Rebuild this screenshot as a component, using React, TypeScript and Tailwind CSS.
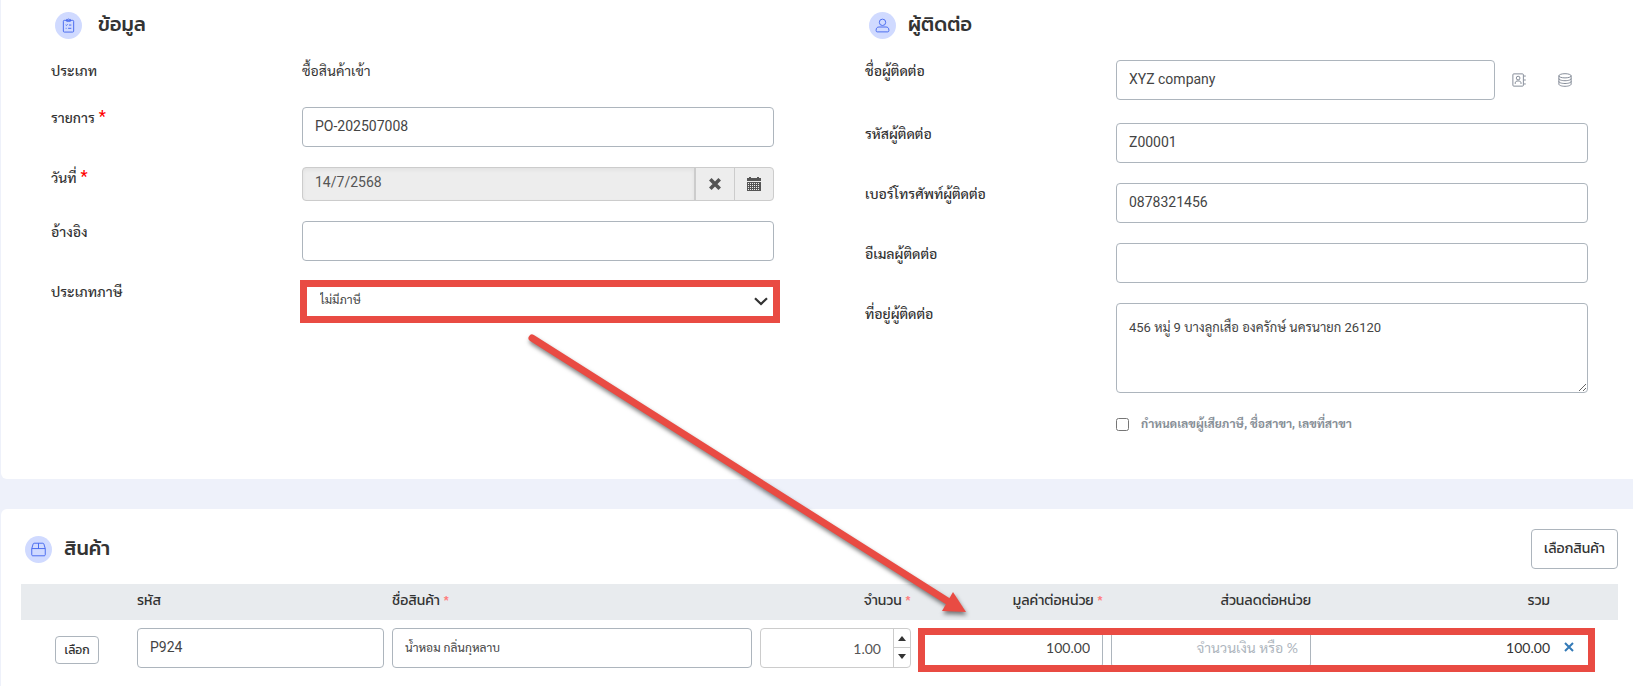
import type { ReactNode } from "react";

const icons = {
  clipboard: (
    <>
      <rect x="2.500" y="2.500" width="11" height="12.500" rx="1" />
      <path d="M6 2.500V1.500h1.200a.9.9 0 0 1 1.600 0H10v2H6zM5 7.300l.8.700 1.200-1.400M8.500 7.500h2.500M5 11h.9M7.600 11H11" />
    </>
  ),
  person: (
    <>
      <circle cx="8" cy="4.600" r="3.400" />
      <path d="M1.200 13c0-2.300 1.200-3.400 3-3.400h7.600c1.800 0 3 1.100 3 3.400v.7c0 .7-.5 1.100-1.100 1.100H2.300c-.6 0-1.100-.4-1.100-1.100z" />
    </>
  ),
  box: (
    <>
      <path d="M.8 7 2.300 2c.2-.4.500-.7 1-.7h9.400c.5 0 .8.300 1 .7L15.200 7v6.700c0 .6-.4 1-1 1H1.800c-.6 0-1-.4-1-1z" />
      <path d="M.8 7h14.400M8 1.300V7" />
    </>
  ),
  contacts: (
    <>
      <rect x="1" y="1" width="12" height="14" rx="1" />
      <circle cx="7" cy="5.800" r="2.100" />
      <path d="M3.700 12.500v-1c0-1.600 1-2.400 3.300-2.400s3.300.8 3.300 2.400v1M14.800 2.500v2M14.800 7v2M14.800 11.500v2" />
    </>
  ),
  database: (
    <>
      <ellipse cx="8" cy="3.200" rx="7" ry="2.400" />
      <path d="M1 3.200v9.500C1 14.100 4.100 15.200 8 15.200s7-1.100 7-2.500V3.200M1 6.400c0 1.400 3.100 2.400 7 2.400s7-1 7-2.400M1 9.600C1 11 4.100 12 8 12s7-1 7-2.400" />
    </>
  ),
};

function Icon({ name, className = "size-4" }: { name: keyof typeof icons; className?: string }) {
  return (
    <svg viewBox="0 0 16 16" fill="none" stroke="currentColor" className={className} aria-hidden="true">
      {icons[name]}
    </svg>
  );
}

const field = "block h-10 w-full rounded border border-[#adb5bd] bg-white px-3 pb-0.5 text-[#444] outline-none";
const kanit = "font-[Kanit,Prompt,'Noto_Sans_Thai','Noto_Sans',sans-serif]";
const number = "font-[Lato,Sarabun,'Noto_Sans_Thai',sans-serif]";

function Heading({ icon, gap, children }: { icon: keyof typeof icons; gap: string; children: ReactNode }) {
  return (
    <div className={`flex items-center ${gap}`}>
      <span className="flex size-[27px] items-center justify-center rounded-full bg-[#d0daff] text-[#4468ee]">
        <Icon name={icon} className="size-[15px]" />
      </span>
      <h2 className={`${kanit} pb-0.5 text-xl leading-[26px] font-medium text-[#333]`}>{children}</h2>
    </div>
  );
}

function Row({ label, id, required, children }: { label: string; id?: string; required?: boolean; children: ReactNode }) {
  return (
    <div className="grid grid-cols-[251px_1fr] items-start">
      <label htmlFor={id} className="text-sm leading-[22px] font-medium text-[#333]">
        {label}
        {required && <span className="ml-1 align-top text-base leading-5 text-[#f00]">*</span>}
      </label>
      {children}
    </div>
  );
}

function Star() {
  return <span className="text-[#ff7b7b]">*</span>;
}

export default function App() {
  return (
    <div className="relative min-h-screen overflow-hidden bg-[#eef1fa] pl-px font-[Roboto,Sarabun,'Noto_Sans_Thai_Looped','Noto_Sans',sans-serif] text-sm text-[#333]">
      <section className="mb-[30px] grid grid-cols-2 gap-x-[91px] rounded-bl-md bg-white pt-[11px] pr-[45px] pb-11 pl-[50px]">
        <div>
          <div className="pl-1">
            <Heading icon="clipboard" gap="gap-4">ข้อมูล</Heading>
          </div>
          <div className="mt-[21px] flex flex-col gap-5">
            <Row label="ประเภท">
              <span className="h-[27px] leading-[22px]">ซื้อสินค้าเข้า</span>
            </Row>
            <Row label="รายการ" id="doc-no" required>
              <input id="doc-no" className={`${field} text-sm`} defaultValue="PO-202507008" />
            </Row>
            <Row label="วันที่" id="doc-date" required>
              <div className="flex h-[34px] overflow-hidden rounded border border-[#ccc] bg-[#ededed] text-[#555]">
                <input
                  id="doc-date"
                  readOnly
                  className="min-w-0 flex-1 bg-transparent px-3 pb-1 text-sm shadow-inner outline-none"
                  defaultValue="14/7/2568"
                />
                <button type="button" aria-label="ล้างวันที่" className="flex w-10 items-center justify-center border-l-2 border-[#ccc]">
                  <svg viewBox="0 0 12 12" className="size-3" stroke="currentColor" strokeWidth="3.600">
                    <path d="M1.300 1.300l9.400 9.400M10.700 1.300l-9.400 9.400" />
                  </svg>
                </button>
                <button type="button" aria-label="เลือกวันที่" className="flex w-[39px] items-center justify-center border-l border-[#ccc]">
                  <svg viewBox="0 0 14 14" className="size-3.5" shapeRendering="crispEdges">
                    <path fill="currentColor" d="M0 1h2V0h2v1h6V0h2v1h2v3H0zM0 5h14v9H0z" />
                    <path stroke="#ededed" d="M1 6.500h12M1 8.500h12M1 10.500h12M1 12.500h12" strokeDasharray="1 1" />
                  </svg>
                </button>
              </div>
            </Row>
            <Row label="อ้างอิง" id="reference">
              <input id="reference" className={`${field} text-sm`} />
            </Row>
            <Row label="ประเภทภาษี" id="tax-type">
              <div className="relative">
                <select id="tax-type" className={`${field} appearance-none pr-8 pl-[17px] text-xs`} defaultValue="none">
                  <option value="none">ไม่มีภาษี</option>
                </select>
                <svg
                  viewBox="0 0 14 9"
                  className="pointer-events-none absolute top-4 right-1.5 h-[9px] w-3.5"
                  fill="none"
                  stroke="#333"
                  strokeWidth="2.200"
                >
                  <path d="M1 1.200 7 7l6-5.800" />
                </svg>
                <div className="pointer-events-none absolute -inset-x-0.5 -top-px -right-1.5 h-[43px] border-7 border-[#e94b43]" />
              </div>
            </Row>
          </div>
        </div>

        <div>
          <div className="pl-1">
            <Heading icon="person" gap="gap-3">ผู้ติดต่อ</Heading>
          </div>
          <div className="mt-[21px] flex flex-col gap-5">
            <Row label="ชื่อผู้ติดต่อ" id="contact-name">
              <div className="mb-[3px] flex items-center text-[#767e8c]">
                <input id="contact-name" className={`${field} min-w-0 flex-1 text-sm`} defaultValue="XYZ company" />
                <button type="button" aria-label="สมุดรายชื่อ" className="flex w-[47px] justify-center">
                  <Icon name="contacts" className="size-3.5" />
                </button>
                <button type="button" aria-label="ฐานข้อมูล" className="flex w-[46px] justify-center">
                  <Icon name="database" className="size-3.5" />
                </button>
              </div>
            </Row>
            <Row label="รหัสผู้ติดต่อ" id="contact-code">
              <input id="contact-code" className={`${field} text-sm`} defaultValue="Z00001" />
            </Row>
            <Row label="เบอร์โทรศัพท์ผู้ติดต่อ" id="contact-phone">
              <input id="contact-phone" className={`${field} text-sm`} defaultValue="0878321456" />
            </Row>
            <Row label="อีเมลผู้ติดต่อ" id="contact-email">
              <input id="contact-email" className={`${field} text-sm`} />
            </Row>
            <Row label="ที่อยู่ผู้ติดต่อ" id="contact-address">
              <textarea
                id="contact-address"
                className="block h-[90px] w-full rounded border border-[#adb5bd] px-3 py-[15px] text-[13px] text-[#444] outline-none"
                defaultValue="456 หมู่ 9 บางลูกเสือ องครักษ์ นครนายก 26120"
              />
            </Row>
            <div className="flex h-[22px] items-center gap-3 pl-[251px] text-[#868e96]">
              <input id="tax-id" type="checkbox" className="size-[13px]" />
              <label htmlFor="tax-id" className="text-xs font-bold">
                กำหนดเลขผู้เสียภาษี, ชื่อสาขา, เลขที่สาขา
              </label>
            </div>
          </div>
        </div>
      </section>

      <section className="min-h-[177px] rounded-tl-md bg-white pt-5 pr-[15px] pl-5">
        <div className="flex items-center justify-between pl-1">
          <Heading icon="box" gap="gap-3">สินค้า</Heading>
          <button type="button" className={`${kanit} h-10 rounded border border-[#adb5bd] px-3 text-sm font-normal`}>
            เลือกสินค้า
          </button>
        </div>

        <div className="relative mt-[15px]">
          <table className="w-full table-fixed">
            <colgroup>
              <col className="w-28" />
              <col className="w-[255px]" />
              <col />
              <col className="w-[159px]" />
              <col className="w-48" />
              <col className="w-52" />
              <col className="w-[239px]" />
              <col className="w-16" />
            </colgroup>
            <thead className={`${kanit} bg-[#e8ebee] text-sm text-[#333]`}>
              <tr className="h-9">
                <th />
                <th className="px-1 pb-0.5 text-left font-normal">รหัส</th>
                <th className="px-1 pb-0.5 text-left font-normal">ชื่อสินค้า <Star /></th>
                <th className="px-1 pb-0.5 text-right font-normal">จำนวน <Star /></th>
                <th className="px-1 pb-0.5 text-right font-normal">มูลค่าต่อหน่วย <Star /></th>
                <th className="px-1 pb-0.5 text-right font-normal">ส่วนลดต่อหน่วย</th>
                <th className="px-1 pb-0.5 text-right font-normal">รวม</th>
                <th />
              </tr>
            </thead>
            <tbody>
              <tr className="h-14">
                <td className="pt-1 text-center">
                  <button type="button" className={`${kanit} h-7 rounded border border-[#adb5bd] px-2 text-xs font-normal`}>
                    เลือก
                  </button>
                </td>
                <td className="px-1">
                  <input aria-label="รหัส" className={`${field} text-sm`} defaultValue="P924" />
                </td>
                <td className="px-1">
                  <input aria-label="ชื่อสินค้า" className={`${field} text-xs`} defaultValue="น้ำหอม กลิ่นกุหลาบ" />
                </td>
                <td className="px-1">
                  <div className="flex h-10 overflow-hidden rounded border border-[#ccc]">
                    <input
                      aria-label="จำนวน"
                      className={`${number} min-w-0 flex-1 px-3 pt-0.5 text-right text-sm text-[#555] outline-none`}
                      defaultValue="1.00"
                    />
                    <div className="flex w-[17px] flex-col border-l border-[#ccc] text-[#333]">
                      <button type="button" aria-label="เพิ่ม" className="flex h-[19px] items-center justify-center border-b border-[#ccc]">
                        <svg viewBox="0 0 8 5" className="h-[5px] w-2" fill="currentColor"><path d="M0 5 4 0l4 5z" /></svg>
                      </button>
                      <button type="button" aria-label="ลด" className="flex h-4 items-center justify-center">
                        <svg viewBox="0 0 8 5" className="h-[5px] w-2" fill="currentColor"><path d="M0 0h8L4 5z" /></svg>
                      </button>
                    </div>
                  </div>
                </td>
                <td className="px-1">
                  <input aria-label="มูลค่าต่อหน่วย" className={`${field} ${number} text-right text-sm`} defaultValue="100.00" />
                </td>
                <td className="px-1">
                  <input
                    aria-label="ส่วนลดต่อหน่วย"
                    className={`${field} ${number} text-right text-sm placeholder:text-[#adb5bd]`}
                    placeholder="จำนวนเงิน หรือ %"
                  />
                </td>
                <td className={`${number} px-1 text-right`}>100.00</td>
                <td className="pb-0.5 pl-2.5">
                  <button type="button" aria-label="ลบรายการ" className="block text-[#337ab7]">
                    <svg viewBox="0 0 10 10" className="size-2.5" stroke="currentColor" strokeWidth="2">
                      <path d="M1 1l8 8M9 1 1 9" />
                    </svg>
                  </button>
                </td>
              </tr>
            </tbody>
          </table>
          <div className="pointer-events-none absolute top-11 right-[23px] h-11 w-[677px] border-7 border-[#e94b43]" />
        </div>
      </section>

      {/* arrow from the tax type to the price columns */}
      <svg
        viewBox="0 0 450 300"
        className="pointer-events-none absolute top-[330px] left-[525px] h-[300px] w-[450px] drop-shadow-[1px_3px_2px_rgba(0,0,0,0.5)]"
        aria-hidden="true"
      >
        <path d="M7 8 424 272" stroke="#e94b43" strokeWidth="7" strokeLinecap="round" />
        <path d="M441 282 428 262 417 281z" fill="#e94b43" />
      </svg>
    </div>
  );
}
